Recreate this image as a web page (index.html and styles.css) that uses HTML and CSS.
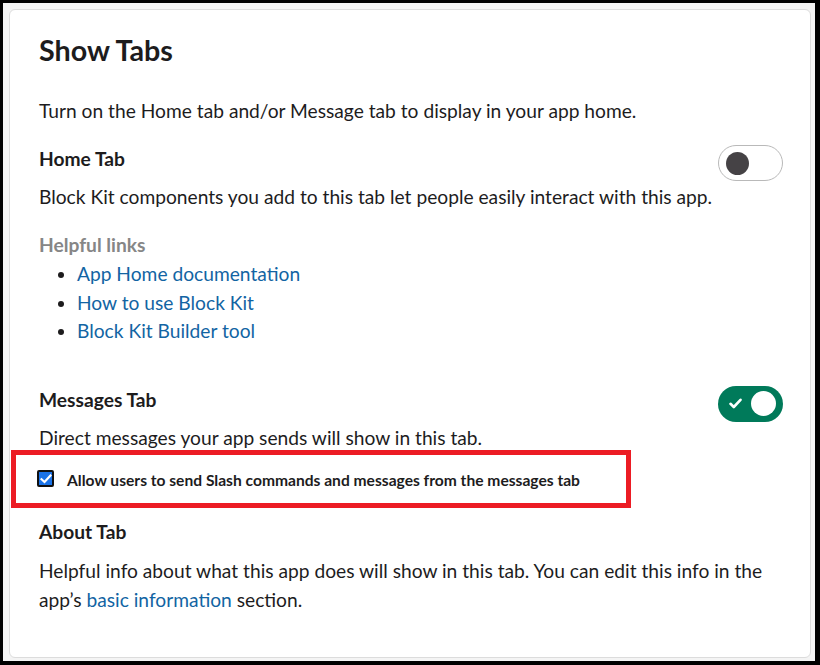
FILE: index.html
```html
<!DOCTYPE html>
<html lang="en">
<head>
<meta charset="utf-8">
<title>Show Tabs</title>
<link rel="stylesheet" href="styles.css">
</head>
<body>
<div class="frame">
  <div class="card">
    <h1 class="title">Show Tabs</h1>
    <p class="intro">Turn on the Home tab and/or Message tab to display in your app home.</p>

    <section class="tab-section first">
      <div class="tab-head">
        <h2 class="tab-name">Home Tab</h2>
        <div class="toggle off"><span class="knob"></span></div>
      </div>
      <p class="desc">Block Kit components you add to this tab let people easily interact with this app.</p>
      <h3 class="links-title">Helpful links</h3>
      <ul class="links">
        <li><a href="#">App Home documentation</a></li>
        <li><a href="#">How to use Block Kit</a></li>
        <li><a href="#">Block Kit Builder tool</a></li>
      </ul>
    </section>

    <section class="tab-section messages">
      <div class="tab-head">
        <h2 class="tab-name">Messages Tab</h2>
        <div class="toggle on">
          <svg class="check" width="13" height="11" viewBox="0 0 13 11"><path d="M1.5 5.8 L4.8 9 L11.5 1.8" fill="none" stroke="#fff" stroke-width="2.6" stroke-linecap="round" stroke-linejoin="round"/></svg>
          <span class="knob"></span>
        </div>
      </div>
      <p class="desc">Direct messages your app sends will show in this tab.</p>
      <div class="highlight">
        <label class="option">
          <span class="checkbox"><svg width="12" height="10" viewBox="0 0 12 10"><path d="M1.5 5.2 L4.5 8 L10.5 1.5" fill="none" stroke="#fff" stroke-width="2.2" stroke-linecap="square"/></svg></span>
          <span class="option-text">Allow users to send Slash commands and messages from the messages tab</span>
        </label>
      </div>
    </section>

    <section class="tab-section about">
      <h2 class="tab-name">About Tab</h2>
      <p class="about-text">Helpful info about what this app does will show in this tab. You can edit this info in the app’s <a href="#">basic information</a> section.</p>
    </section>
  </div>
</div>
</body>
</html>
```

FILE: styles.css
```css
html, body {
  margin: 0;
  padding: 0;
  background: #000;
}

body {
  width: 820px;
  height: 665px;
  overflow: hidden;
  font-family: Lato, "Noto Sans", sans-serif;
  color: #1d1c1d;
}

.frame {
  margin: 3px 5px 4px 3px;
  height: 658px;
  box-sizing: border-box;
  padding: 6px 4px 3px 6px;
  background: #f4f4f4;
}

.card {
  box-sizing: border-box;
  height: 649px;
  background: #fff;
  border: 1px solid #dcdcdc;
  border-radius: 6px;
  padding: 22px 27px 0 29px;
}

.title {
  margin: 0;
  font-size: 28.7px;
  line-height: 36px;
  font-weight: 700;
}

.intro {
  margin: 29px 0 0;
  font-size: 19.2px;
  line-height: 28px;
}

.tab-section.first {
  margin-top: 20px;
}

.tab-section.messages {
  margin-top: 40px;
}

.tab-head {
  display: flex;
  justify-content: space-between;
  align-items: flex-start;
}

.tab-name {
  margin: 0;
  font-size: 19.2px;
  line-height: 28px;
  font-weight: 700;
}

.desc {
  margin: 2px 0 0;
  font-size: 19.2px;
  line-height: 28px;
}

.toggle {
  box-sizing: border-box;
  width: 65px;
  height: 36px;
  border-radius: 18px;
  display: flex;
  align-items: center;
}

.toggle.off {
  border: 1px solid #b9b9b9;
  background: #fff;
  padding-left: 7px;
}

.toggle.off .knob {
  width: 23px;
  height: 23px;
  border-radius: 50%;
  background: #454245;
}

.toggle.on {
  background: #007a5a;
  justify-content: space-between;
  padding: 0 7px 0 11px;
}

.toggle.on .knob {
  width: 25px;
  height: 25px;
  border-radius: 50%;
  background: #fff;
}

.check {
  display: block;
}

.links-title {
  margin: 20px 0 0;
  font-size: 19.2px;
  line-height: 28px;
  font-weight: 700;
  color: #868686;
}

.links {
  margin: 1px 0 0;
  padding-left: 38px;
  font-size: 19.2px;
  line-height: 28.5px;
}

.links a,
.about-text a {
  color: #1264a3;
  text-decoration: none;
}

.highlight {
  box-sizing: border-box;
  margin: -2px 0 0 -28px;
  width: 620px;
  height: 58px;
  border: 5px solid #ec1c24;
  display: flex;
  align-items: center;
  padding-left: 21px;
}

.option {
  display: flex;
  align-items: center;
  gap: 13px;
}

.checkbox {
  box-sizing: border-box;
  width: 17px;
  height: 17px;
  border: 2px solid #111;
  border-radius: 2px;
  background: #1a73e8;
  display: flex;
  align-items: center;
  justify-content: center;
}

.checkbox svg {
  display: block;
}

.option-text {
  font-size: 15.6px;
  font-weight: 700;
  line-height: 20px;
  padding-top: 2px;
}

.tab-section.about {
  margin-top: 10px;
}

.about-text {
  margin: 10px 0 0;
  font-size: 19.2px;
  line-height: 29px;
}
```
